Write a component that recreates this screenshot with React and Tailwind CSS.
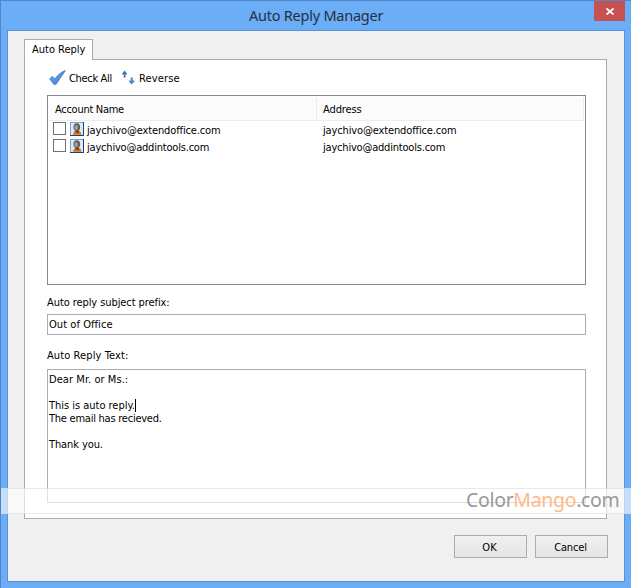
import { useState } from "react";

const accounts = [
  { id: 1, email: "jaychivo@extendoffice.com", spacing: "tracking-[-0.13px]" },
  { id: 2, email: "jaychivo@addintools.com", spacing: "tracking-[-0.2px]" },
];

const replyLines = [
  { text: "Dear Mr. or Ms.:", spacing: "tracking-[0.06px]" },
  { text: "", spacing: "" },
  { text: "This is auto reply.", spacing: "tracking-[-0.02px]", caret: true },
  { text: "The email has recieved.", spacing: "tracking-[-0.24px]" },
  { text: "", spacing: "" },
  { text: "Thank you.", spacing: "tracking-[-0.1px]" },
];

function CheckIcon() {
  return (
    <svg width="17" height="16" viewBox="0 0 17 16" className="shrink-0">
      <defs>
        <linearGradient id="tick" x1="0" y1="0" x2="1" y2="1">
          <stop offset="0" stopColor="#7cb8f0" />
          <stop offset="0.6" stopColor="#4a90dc" />
          <stop offset="1" stopColor="#285fa8" />
        </linearGradient>
      </defs>
      <path
        d="M0.6 8.8 L3.2 6.4 L6 8.8 C8.8 5 12.4 1.8 16.4 0.6 C13.4 4.6 10.4 9.6 7.4 13.8 L5.2 14.8 Z"
        fill="url(#tick)"
        stroke="#2f6cb8"
        strokeWidth="0.7"
      />
    </svg>
  );
}

function ReverseIcon() {
  return (
    <svg width="13" height="15" viewBox="0 0 13 15" className="shrink-0">
      <path d="M2.5 0.5 L5 3.5 V4.5 H3.5 V7.5 H1.7 V4.5 H0.2 V3.5 Z" fill="#4673b5" />
      <path d="M9.7 14.5 L12.4 11.5 V10.5 H10.7 V7.5 H8.7 V10.5 H7 V11.5 Z" fill="#4f88d0" />
    </svg>
  );
}

function AccountIcon() {
  return (
    <svg width="14" height="14" viewBox="0 0 14 14" className="shrink-0">
      <rect width="14" height="14" fill="#7f9fcc" />
      <rect x="1" y="1" width="12" height="12" fill="#dbe8f6" />
      <path d="M13 0 H14 V14 H0 V13 H13 Z" fill="#1d4076" />
      <path d="M3 12.8 C3.2 10.4 5 8.8 7.2 8.8 C9.8 8.8 11.2 10.4 11.4 12.8 Z" fill="#d96d18" />
      <path d="M5 9 L8 11.4 L9 8.8 Z" fill="#6b3615" />
      <ellipse cx="6.8" cy="5.2" rx="3.3" ry="3.9" fill="#605b5b" />
      <ellipse cx="6.2" cy="5.6" rx="1.9" ry="2.6" fill="#a59b97" />
    </svg>
  );
}

function TitleBar() {
  return (
    <div className="flex h-[29px] items-start">
      <div className="w-[248px]" />
      <h1 className="w-[345px] whitespace-nowrap font-['Noto_Sans',sans-serif] text-[14.5px] leading-[29px] tracking-[-0.24px] text-[#26303d]">
        Auto Reply Manager
      </h1>
      <button aria-label="Close" className="flex h-5 w-[31px] items-center justify-center bg-[#c75050]">
        <svg width="8" height="7" viewBox="0 0 8 7">
          <path d="M0.5 0.5 L7.5 6.5 M7.5 0.5 L0.5 6.5" stroke="#fff" strokeWidth="1.8" />
        </svg>
      </button>
    </div>
  );
}

function AccountList() {
  const [checked, setChecked] = useState([]);

  const toggle = (id) => {
    setChecked(checked.includes(id) ? checked.filter((c) => c !== id) : [...checked, id]);
  };

  return (
    <div className="h-[190px] w-[539px] border border-[#828790] bg-white p-px">
      <div className="flex h-6 border-b border-[#e3eefb] bg-[#fcfcfc] leading-[25px]">
        <div className="w-[268px] border-r border-[#e3eefb] pl-[6px]">
          <span className="tracking-[-0.28px]">Account Name</span>
        </div>
        <div className="w-[267px] border-r border-[#e3eefb] pl-[6px] tracking-[-0.1px]">Address</div>
      </div>
      {accounts.map((account) => (
        <div key={account.id} className="flex h-[17px] pt-px leading-[17px]">
          <div className="flex w-[268px] pl-1">
            <button
              role="checkbox"
              aria-checked={checked.includes(account.id)}
              aria-label={account.email}
              onClick={() => toggle(account.id)}
              className="mr-1 h-[13px] w-[13px] border border-[#707070] bg-white"
            />
            <AccountIcon />
            <span className={`pl-[3px] ${account.spacing}`}>{account.email}</span>
          </div>
          <span className={`pl-[6px] ${account.spacing}`}>{account.email}</span>
        </div>
      ))}
    </div>
  );
}

function App() {
  return (
    <div className="relative h-[588px] w-[631px] overflow-hidden border-l border-t border-[#4f86c4] bg-[#6badf6] font-['DejaVu_Sans_Condensed','DejaVu_Sans',sans-serif] text-[11px] text-black">
      <TitleBar />

      <div className="ml-[6px] h-[552px] w-[618px] border border-[#5a93d3] bg-[#f0f0f0] pl-4 pt-2">
        {/* Tab */}
        <div className="relative z-10 -mb-px h-[21px] w-[69px] border border-b-0 border-[#acacac] bg-white pl-[7px] leading-[20px]">
          Auto Reply
        </div>

        {/* Tab panel */}
        <div className="h-[460px] w-[583px] border border-[#acacac] bg-white pl-[22px] pt-[10px]">
          <div className="flex h-[25px] items-start leading-[17px]">
            <div className="flex pl-[2px]">
              <CheckIcon />
              <span className="w-[56px] pl-[3px] tracking-[-0.33px]">Check All</span>
            </div>
            <div className="flex">
              <ReverseIcon />
              <span className="pl-[4px] tracking-[0.15px]">Reverse</span>
            </div>
          </div>

          <AccountList />

          <p className="mt-[9px] h-5 leading-[17px] tracking-[-0.08px]">Auto reply subject prefix:</p>
          <div className="h-[21px] w-[539px] border border-[#abadb3] bg-white pl-px leading-[19px] tracking-[0.06px]">
            Out of Office
          </div>

          <p className="mt-3 h-[22px] leading-[17px] tracking-[0.1px]">Auto Reply Text:</p>
          <div className="h-[134px] w-[539px] border border-[#abadb3] bg-white pl-px pt-[3px] leading-[13px]">
            {replyLines.map((line, i) => (
              <div key={i} className="flex h-[13px]">
                <span className={line.spacing}>{line.text}</span>
                {line.caret && <span className="h-[13px] w-px bg-black" />}
              </div>
            ))}
          </div>
        </div>

        {/* Dialog buttons */}
        <div className="ml-[430px] mt-4 flex gap-2">
          <button className="h-[23px] w-[73px] border border-[#acacac] bg-linear-to-b from-[#f0f0f0] to-[#e5e5e5] pr-[2px] pt-[3px]">
            OK
          </button>
          <button className="h-[23px] w-[73px] border border-[#acacac] bg-linear-to-b from-[#f0f0f0] to-[#e5e5e5] pr-[2px] pt-[3px] tracking-[-0.15px]">
            Cancel
          </button>
        </div>
      </div>

      {/* Watermark strip */}
      <div className="absolute left-0 top-[487px] z-20 h-[26px] w-[630px] border-y border-[#d8d8d8]/60 bg-white/60 pl-[465px] font-['Noto_Sans',sans-serif] text-[19.5px] leading-[22px] tracking-[-0.33px] text-[#999]">
        <span>Color</span>
        <span className="text-[#ffb98a]">Mango</span>
        <span>.com</span>
      </div>
    </div>
  );
}

export default App;
